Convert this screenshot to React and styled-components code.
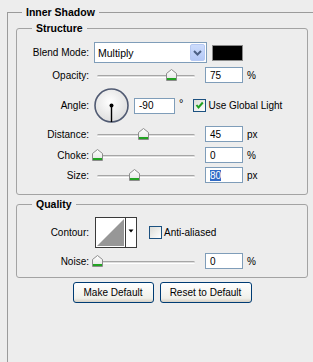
import React from 'react';
import styled, { createGlobalStyle } from 'styled-components';

const Global = createGlobalStyle`
  html, body { margin: 0; padding: 0; background: #ededed; overflow: hidden; }
  body { font-family: "Liberation Sans", Arial, sans-serif; font-size: 10px; color: #000; }
  * { box-sizing: border-box; }
`;

const Outer = styled.fieldset`
  margin: 6px 0 0 7px;
  padding: 3px 0 0 0;
  border: 1px solid #9b9b9b;
  border-right: none;
  border-bottom: none;
  width: 306px;
  height: 356px;
  min-inline-size: 0;
`;

const Legend = styled.legend`
  margin-left: ${p => p.$indent}px;
  padding: 0 4px;
  font-weight: bold;
  font-size: 10.5px;
  line-height: 13px;
`;

const Group = styled.fieldset`
  margin: ${p => p.$mt || 0}px 0 0 8px;
  width: 292px;
  padding: ${p => p.$pt}px 0 ${p => p.$pb}px 0;
  border: 1px solid #a3a3a3;
  border-radius: 3px;
  min-inline-size: 0;
`;

const Row = styled.div`
  display: flex;
  align-items: center;
  height: ${p => p.$h}px;
  margin-top: ${p => p.$mt || 0}px;
`;

const Label = styled.div`
  flex: 0 0 72px;
  text-align: right;
  white-space: nowrap;
`;

const Select = styled.div`
  position: relative;
  margin-left: 5px;
  width: 113px;
  height: 21px;
  border: 1px solid #7f9db9;
  background: #fff;
  display: flex;
  align-items: center;
  padding-left: 3px;
  font-size: 10.5px;
`;

const SelectArrow = styled.div`
  position: absolute;
  right: 1px;
  top: 1px;
  width: 15px;
  height: 17px;
  border: 1px solid #b6c9f3;
  border-radius: 2px;
  background: linear-gradient(#cddcfc, #b4c8f6);
  display: flex;
  align-items: center;
  justify-content: center;
`;

const Swatch = styled.div`
  margin-left: 5px;
  width: 31px;
  height: 16px;
  background: #000;
  border: 1px solid #8a8a8a;
`;

const SliderWrap = styled.div`
  position: relative;
  flex: none;
  width: 111px;
  height: 16px;
  margin-left: 5px;
`;

const Track = styled.div`
  position: absolute;
  left: 3px;
  top: 8px;
  width: 98px;
  height: 3px;
  border-top: 1px solid #a6a6a6;
  border-bottom: 1px solid #ffffff;
  background: #dedede;
  border-radius: 2px;
`;

const ThumbBox = styled.div`
  position: absolute;
  top: 2px;
  width: 11px;
  height: 12px;
  line-height: 0;
`;

const Input = styled.div`
  flex: none;
  width: ${p => p.$w || 38}px;
  height: 16px;
  border: 1px solid #7f9db9;
  background: #fff;
  padding-left: 4px;
  display: flex;
  align-items: center;
  margin-left: ${p => p.$ml || 0}px;
`;

const Selected = styled.span`
  background: #316ac5;
  color: #fff;
`;

const Unit = styled.span`
  margin-left: 4px;
`;

const Degree = styled.span`
  align-self: flex-start;
  margin: 9px 0 0 4px;
  font-size: 11px;
`;

const CheckBox = styled.div`
  flex: none;
  width: 13px;
  height: 13px;
  border: 1px solid #1c5180;
  background: linear-gradient(135deg, #dcdcd7, #ffffff);
  margin-left: ${p => p.$ml}px;
  margin-right: 2px;
  line-height: 0;
`;

const Dial = styled.div`
  margin-left: 5px;
  width: 35px;
  height: 35px;
  line-height: 0;
`;

const Contour = styled.div`
  margin-left: 6px;
  width: 42px;
  height: 31px;
  line-height: 0;
`;

const Buttons = styled.div`
  display: flex;
  justify-content: center;
  gap: 6px;
  width: 292px;
  margin: 4px 0 0 8px;
`;

const Button = styled.button`
  width: ${p => p.$w}px;
  height: 21px;
  border: 1px solid #003c74;
  border-radius: 3px;
  background: linear-gradient(#ffffff, #f0f0ea 80%, #d6d0c5);
  font-family: "Liberation Sans", Arial, sans-serif;
  font-size: 10px;
  color: #000;
  padding: 0;
`;

function Thumb() {
  return (
    <svg width="11" height="12" viewBox="0 0 11 12">
      <defs>
        <linearGradient id="thg" x1="0" y1="0" x2="0" y2="1">
          <stop offset="0" stopColor="#ffffff" />
          <stop offset="1" stopColor="#e4e4e4" />
        </linearGradient>
      </defs>
      <path d="M0.5 4.5 L5.5 0.5 L10.5 4.5 L10.5 11.5 L0.5 11.5 Z" fill="url(#thg)" stroke="#8c8c8c" />
      <rect x="1" y="9" width="9" height="2" fill="#22a322" />
    </svg>
  );
}

function Slider({ pos }) {
  const left = 3 + pos * 98 - 5.5;
  return (
    <SliderWrap>
      <Track />
      <ThumbBox style={{ left: `${left}px` }}>
        <Thumb />
      </ThumbBox>
    </SliderWrap>
  );
}

function SliderRow({ label, pos, value, unit, mt, selected }) {
  return (
    <Row $h={16} $mt={mt}>
      <Label>{label}</Label>
      <Slider pos={pos} />
      <Input>{selected ? <Selected>{value}</Selected> : value}</Input>
      <Unit>{unit}</Unit>
    </Row>
  );
}

function Check() {
  return (
    <svg width="11" height="11" viewBox="0 0 11 11">
      <path d="M2.5 5 L4.5 7.5 L8.8 2.5" fill="none" stroke="#21a121" strokeWidth="2" />
    </svg>
  );
}

export default function App() {
  return (
    <>
      <Global />
      <Outer>
        <Legend $indent={14}>Inner Shadow</Legend>
        <Group $pt={7} $pb={11}>
          <Legend $indent={15}>Structure</Legend>
          <Row $h={21}>
            <Label>Blend Mode:</Label>
            <Select>
              Multiply
              <SelectArrow>
                <svg width="9" height="6" viewBox="0 0 9 6">
                  <path d="M1 1 L4.5 4.5 L8 1" fill="none" stroke="#4d6185" strokeWidth="2" />
                </svg>
              </SelectArrow>
            </Select>
            <Swatch />
          </Row>
          <SliderRow label="Opacity:" pos={0.76} value="75" unit="%" mt={4} />
          <Row $h={35} $mt={5}>
            <Label>Angle:</Label>
            <Dial>
              <svg width="35" height="35" viewBox="0 0 35 35">
                <defs>
                  <radialGradient id="dg" cx="0.45" cy="0.4" r="0.6">
                    <stop offset="0" stopColor="#ffffff" />
                    <stop offset="1" stopColor="#dedede" />
                  </radialGradient>
                </defs>
                <circle cx="17.5" cy="17.5" r="16.5" fill="url(#dg)" stroke="#505a72" strokeWidth="1.6" />
                <line x1="17.5" y1="17.5" x2="17.5" y2="34" stroke="#000" strokeWidth="1.4" />
                <circle cx="17.5" cy="17.5" r="2" fill="#000" />
              </svg>
            </Dial>
            <Input $w={41} $ml={5}>-90</Input>
            <Degree>°</Degree>
            <CheckBox $ml={10}>
              <Check />
            </CheckBox>
            Use Global Light
          </Row>
          <SliderRow label="Distance:" pos={0.47} value="45" unit="px" mt={3} />
          <SliderRow label="Choke:" pos={0.01} value="0" unit="%" mt={5} />
          <SliderRow label="Size:" pos={0.38} value="80" unit="px" mt={4} selected />
        </Group>
        <Group $pt={6} $pb={8} $mt={3}>
          <Legend $indent={15}>Quality</Legend>
          <Row $h={31}>
            <Label>Contour:</Label>
            <Contour>
              <svg width="42" height="31" viewBox="0 0 42 31">
                <rect x="0.5" y="0.5" width="41" height="30" fill="#fff" stroke="#3a3a3a" />
                <polygon points="2,29 29,2 29,29" fill="#979797" />
                <line x1="30.5" y1="1" x2="30.5" y2="30" stroke="#3a3a3a" />
                <polygon points="33.5,12.5 38.5,12.5 36,15.5" fill="#000" />
              </svg>
            </Contour>
            <CheckBox $ml={12} />
            Anti-aliased
          </Row>
          <SliderRow label="Noise:" pos={0.01} value="0" unit="%" mt={5} />
        </Group>
        <Buttons>
          <Button $w={81}>Make Default</Button>
          <Button $w={92}>Reset to Default</Button>
        </Buttons>
      </Outer>
    </>
  );
}
